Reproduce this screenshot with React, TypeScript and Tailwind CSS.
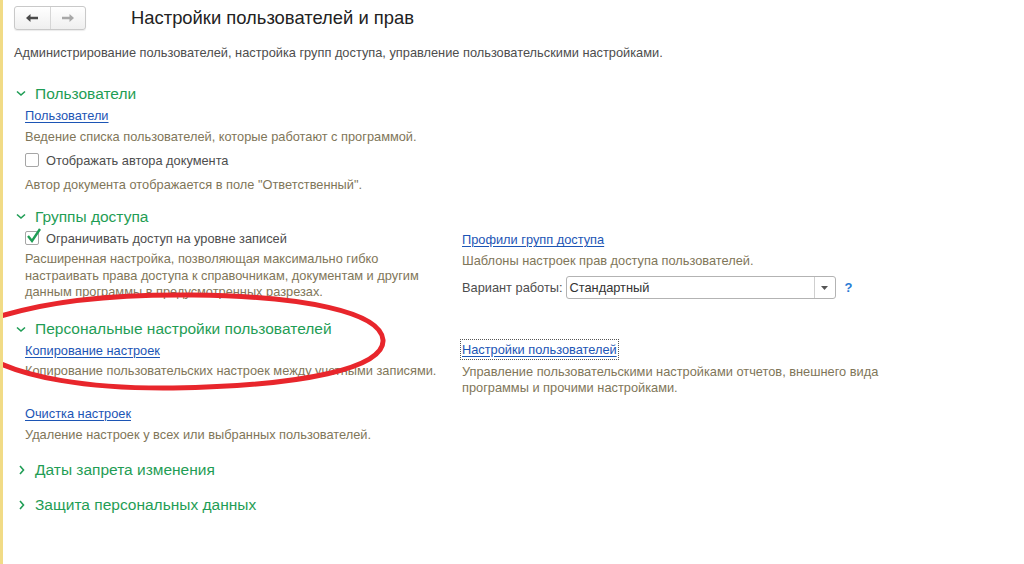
import React from 'react';

const font = { fontFamily: '"Liberation Sans", Arial, sans-serif' };

function Chevron({ open }: { open: boolean }) {
  return (
    <svg width="12" height="12" viewBox="0 0 12 12" className="shrink-0">
      {open ? (
        <path d="M2 4.5 L6 8 L10 4.5" fill="none" stroke="#1f9d55" strokeWidth="1.6" />
      ) : (
        <path d="M5 2 L8.5 6 L5 10" fill="none" stroke="#1f9d55" strokeWidth="1.6" />
      )}
    </svg>
  );
}

function SectionHeader({ title, open = true }: { title: string; open?: boolean }) {
  return (
    <div className="flex items-center gap-[8px] h-[22px] pl-[1px] text-[15.5px] text-[#1f9d55]">
      <Chevron open={open} />
      <span>{title}</span>
    </div>
  );
}

function Link({ children, focused = false }: { children: React.ReactNode; focused?: boolean }) {
  return (
    <div className="h-[21px] flex items-center">
      <span
        className={`text-[12.8px] text-[#1c55b5] underline underline-offset-2 ${
          focused ? 'outline outline-1 outline-dotted outline-[#555] px-[1px] -ml-[1px]' : ''
        }`}
      >
        {children}
      </span>
    </div>
  );
}

function Desc({ children }: { children: React.ReactNode }) {
  return <div className="text-[12.8px] leading-[16.5px] text-[#7f7659]">{children}</div>;
}

function Checkbox({ checked, label }: { checked: boolean; label: string }) {
  return (
    <div className="flex items-center gap-[7px] h-[22px]">
      <div className="relative w-[14px] h-[14px] border border-[#a6a6a6] rounded-[2px] bg-white shrink-0">
        {checked && (
          <svg width="18" height="18" viewBox="0 0 18 18" className="absolute -left-[1px] -top-[5px]">
            <path d="M3 9 L7 14 L15 2" fill="none" stroke="#1f9d55" strokeWidth="2.4" />
          </svg>
        )}
      </div>
      <span className="text-[12.8px] text-[#4d4d4d]">{label}</span>
    </div>
  );
}

export default function App() {
  return (
    <div className="relative w-[1024px] h-[564px] bg-white overflow-hidden border-l-[3px] border-[#f1db86]" style={font}>
      <div className="pl-[11px] pt-[6px]">
        {/* top bar */}
        <div className="flex items-center h-[24px]">
          <div className="flex w-[72px] h-[24px] border border-[#c9c9c9] rounded-[3px] bg-gradient-to-b from-white to-[#efefef] shadow-[0_1px_1px_rgba(0,0,0,0.08)]">
            <div className="flex-1 flex items-center justify-center border-r border-[#d6d6d6]">
              <svg width="14" height="10" viewBox="0 0 14 10">
                <path d="M1 5 L5.5 1 V3.8 H13 V6.2 H5.5 V9 Z" fill="#4a4a4a" />
              </svg>
            </div>
            <div className="flex-1 flex items-center justify-center">
              <svg width="14" height="10" viewBox="0 0 14 10">
                <path d="M13 5 L8.5 1 V3.8 H1 V6.2 H8.5 V9 Z" fill="#a8a8a8" />
              </svg>
            </div>
          </div>
          <div className="ml-[45px] text-[18.4px] text-[#222]">Настройки пользователей и прав</div>
        </div>

        <div className="mt-[13px] text-[12.8px] text-[#4d4d4d]">
          Администрирование пользователей, настройка групп доступа, управление пользовательскими настройками.
        </div>

        {/* Пользователи */}
        <div className="mt-[20px]">
          <SectionHeader title="Пользователи" />
          <div className="pl-[11px]">
            <div className="mt-[1px]">
              <Link>Пользователи</Link>
            </div>
            <div className="h-[23px] flex items-center">
              <Desc>Ведение списка пользователей, которые работают с программой.</Desc>
            </div>
            <Checkbox checked={false} label="Отображать автора документа" />
            <div className="h-[26px] pt-[2px] flex items-center">
              <Desc>Автор документа отображается в поле "Ответственный".</Desc>
            </div>
          </div>
        </div>

        {/* Группы доступа */}
        <div className="mt-[8px]">
          <SectionHeader title="Группы доступа" />
          <div className="pl-[11px] grid grid-cols-[437px_1fr]">
            <div>
              <Checkbox checked={true} label="Ограничивать доступ на уровне записей" />
              <div className="mt-[2px] w-[410px]">
                <Desc>
                  Расширенная настройка, позволяющая максимально гибко настраивать права доступа к справочникам,
                  документам и другим данным программы в предусмотренных разрезах.
                </Desc>
              </div>
            </div>
            <div>
              <div className="h-[23px] flex items-end">
                <Link>Профили групп доступа</Link>
              </div>
              <div className="h-[22px] flex items-center">
                <Desc>Шаблоны настроек прав доступа пользователей.</Desc>
              </div>
              <div className="flex items-center mt-[4px] h-[23px]">
                <span className="text-[12.8px] text-[#4d4d4d] mr-[3px]">Вариант работы:</span>
                <div className="flex w-[270px] h-[23px] border border-[#b3b3b3] rounded-[3px] bg-white">
                  <div className="flex-1 flex items-center px-[3px] text-[12.8px] text-[#333]">Стандартный</div>
                  <div className="w-[21px] flex items-center justify-center border-l border-[#cfcfcf]">
                    <svg width="7" height="4" viewBox="0 0 7 4">
                      <path d="M0 0 H7 L3.5 4 Z" fill="#555" />
                    </svg>
                  </div>
                </div>
                <span className="ml-[9px] text-[13px] font-bold text-[#2a7bd4]">?</span>
              </div>
            </div>
          </div>
        </div>

        {/* Персональные настройки */}
        <div className="mt-[17px]">
          <SectionHeader title="Персональные настройки пользователей" />
          <div className="pl-[11px] grid grid-cols-[437px_1fr]">
            <div>
              <Link>Копирование настроек</Link>
              <div className="h-[22px] flex items-center">
                <Desc>Копирование пользовательских настроек между учетными записями.</Desc>
              </div>
              <div className="mt-[20px]">
                <Link>Очистка настроек</Link>
              </div>
              <div className="h-[23px] pt-[1px] flex items-center">
                <Desc>Удаление настроек у всех или выбранных пользователей.</Desc>
              </div>
            </div>
            <div>
              <div className="-mt-[1px]">
                <Link focused>Настройки пользователей</Link>
              </div>
              <div className="mt-[4px] w-[430px]">
                <Desc>Управление пользовательскими настройками отчетов, внешнего вида программы и прочими настройками.</Desc>
              </div>
            </div>
          </div>
        </div>

        <div className="mt-[12px]">
          <SectionHeader title="Даты запрета изменения" open={false} />
        </div>
        <div className="mt-[13px]">
          <SectionHeader title="Защита персональных данных" open={false} />
        </div>
      </div>

      {/* red annotation ellipse */}
      <svg className="absolute left-0 top-0 pointer-events-none" width="1024" height="564" viewBox="0 0 1024 564">
        <path
          d="M-8 318 C 40 302, 110 294, 190 295 C 300 296, 378 312, 380 340 C 382 368, 300 386, 170 388 C 80 389, 20 376, -10 360"
          fill="none"
          stroke="#e8262c"
          strokeWidth="5"
          strokeLinecap="round"
        />
      </svg>
    </div>
  );
}
